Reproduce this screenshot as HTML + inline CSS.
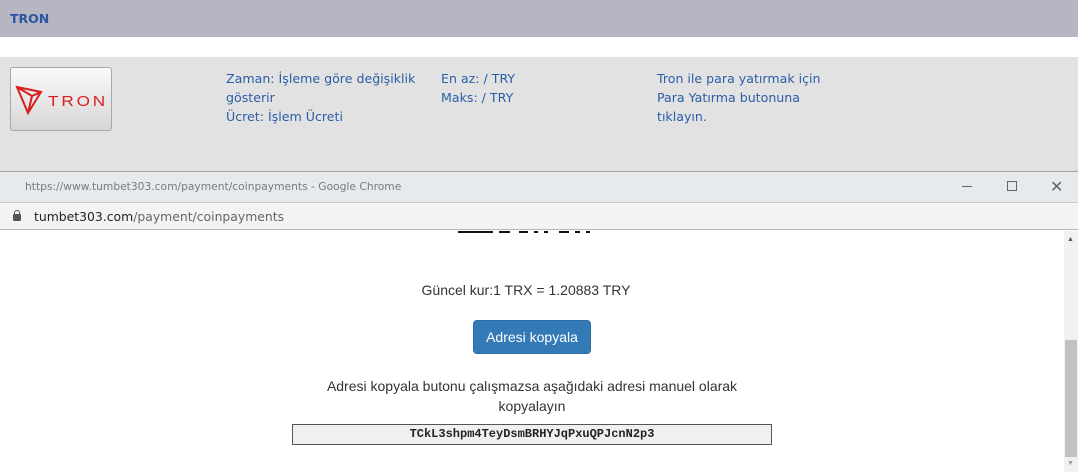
<!DOCTYPE html>
<html><head><meta charset="utf-8"><style>
*{margin:0;padding:0;box-sizing:border-box}
body{width:1078px;height:472px;overflow:hidden;position:relative;font-family:"Liberation Sans",sans-serif;background:#fff}
.a{position:absolute}
.info{font-family:"DejaVu Sans","Liberation Sans",sans-serif;color:#2b5ea8;font-size:12.6px;line-height:19px}
</style></head><body>
<div class="a" style="left:0;top:0;width:1078px;height:37px;background:#b6b6c3"></div>
<div class="a" style="left:10px;top:11px;font-family:'DejaVu Sans',sans-serif;font-weight:bold;font-size:12.5px;color:#2a55a0">TRON</div>
<div class="a" style="left:0;top:57px;width:1078px;height:116px;background:#e2e2e2"></div>
<div class="a" style="left:10px;top:67px;width:102px;height:64px;border:1px solid #a8a8a8;border-radius:3px;background:linear-gradient(#fafafa,#d6d6d6)">
<svg width="100" height="62" viewBox="0 0 100 62" style="position:absolute;left:0;top:0">
<g fill="none" stroke="#d81e1e" stroke-width="2">
<path d="M6 19 L30 24 L17 45 Z M6 19 L21 28 L17 45 M21 28 L30 24"/>
</g>
<text x="37" y="38" font-family="Liberation Sans,sans-serif" font-size="15" fill="#d81e1e" letter-spacing="2.5" textLength="60" lengthAdjust="spacingAndGlyphs">TRON</text>
</svg></div>
<div class="a info" style="left:226px;top:69px;width:210px">Zaman: İşleme göre değişiklik gösterir<br>Ücret: İşlem Ücreti</div>
<div class="a info" style="left:441px;top:69px">En az: / TRY<br>Maks: / TRY</div>
<div class="a info" style="left:657px;top:69px;width:190px">Tron ile para yatırmak için Para Yatırma butonuna tıklayın.</div>
<div class="a" style="left:0;top:171px;width:1078px;height:32px;background:#e7eaed;border-top:1px solid #a0a0a0;border-bottom:1px solid #c8c8c8"></div>
<div class="a" style="left:25px;top:180px;font-family:'DejaVu Sans',sans-serif;font-size:10.7px;color:#7a7a7a">https://www.tumbet303.com/payment/coinpayments - Google Chrome</div>
<div class="a" style="left:962px;top:186px;width:10px;height:1px;background:#666"></div>
<div class="a" style="left:1007px;top:181px;width:10px;height:10px;border:1px solid #666"></div>
<div class="a" style="left:1050px;top:177px;font-size:16px;color:#666">✕</div>
<div class="a" style="left:0;top:203px;width:1078px;height:27px;background:#f1f3f4;border-bottom:1px solid #b8b8b8"></div>
<div class="a" style="left:13px;top:214px;width:8px;height:7px;background:#555;border-radius:1px"></div>
<div class="a" style="left:14px;top:210px;width:6px;height:6px;border:1.5px solid #555;border-bottom:none;border-radius:3px 3px 0 0"></div>
<div class="a" style="left:34px;top:209px;font-family:'DejaVu Sans',sans-serif;font-size:12.4px;color:#222">tumbet303.com<span style="color:#666">/payment/coinpayments</span></div>
<div class="a" style="left:458px;top:231px;width:35px;height:2px;background:#111"></div>
<div class="a" style="left:499px;top:231px;width:11px;height:2px;background:#111"></div>
<div class="a" style="left:519px;top:231px;width:9px;height:2px;background:#111"></div>
<div class="a" style="left:534px;top:231px;width:4px;height:2px;background:#111"></div>
<div class="a" style="left:544px;top:231px;width:4px;height:2px;background:#111"></div>
<div class="a" style="left:559px;top:231px;width:10px;height:2px;background:#111"></div>
<div class="a" style="left:575px;top:231px;width:5px;height:2px;background:#111"></div>
<div class="a" style="left:586px;top:231px;width:4px;height:2px;background:#111"></div>
<div class="a" style="left:1064px;top:231px;width:14px;height:241px;background:#f1f1f1"></div>
<div class="a" style="left:1065px;top:340px;width:12px;height:117px;background:#c1c1c1"></div>
<div class="a" style="left:1067px;top:236px;font-size:7px;color:#555">▲</div>
<div class="a" style="left:1067px;top:460px;font-size:7px;color:#999">▼</div>
<div class="a" style="left:0;top:282px;width:1052px;text-align:center;font-size:14px;color:#333">Güncel kur:1 TRX = 1.20883 TRY</div>
<div class="a" style="left:473px;top:320px;width:118px;height:34px;background:#337ab7;border:1px solid #2e6da4;border-radius:4px;color:#fff;font-size:14px;text-align:center;line-height:32px">Adresi kopyala</div>
<div class="a" style="left:292px;top:376px;width:480px;text-align:center;font-size:14px;line-height:20px;color:#333">Adresi kopyala butonu çalışmazsa aşağıdaki adresi manuel olarak kopyalayın</div>
<div class="a" style="left:292px;top:424px;width:480px;height:21px;background:#f0f0f0;border:1px solid #555;text-align:center;font-family:'Liberation Mono',monospace;font-weight:bold;font-size:12px;line-height:19px;color:#222">TCkL3shpm4TeyDsmBRHYJqPxuQPJcnN2p3</div>
</body></html>
